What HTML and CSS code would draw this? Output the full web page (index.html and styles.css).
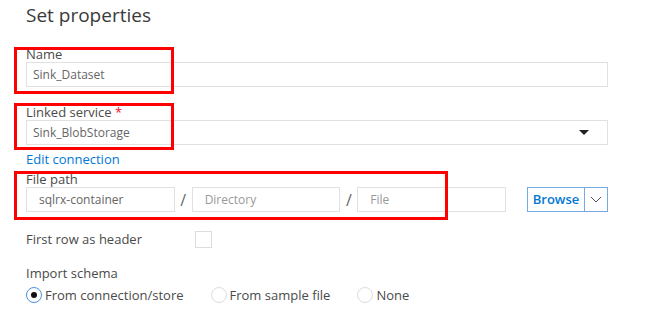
FILE: index.html
```html
<!DOCTYPE html>
<html lang="en">
<head>
    <meta charset="UTF-8">
    <title>Set properties</title>
    <link rel="stylesheet" href="styles.css">
</head>
<body>
    <div class="panel">
        <h1 class="title">Set properties</h1>

        <div class="field field-name">
            <label class="label">Name</label>
            <div class="input wide">Sink_Dataset</div>
        </div>

        <div class="field field-linked">
            <label class="label">Linked service <span class="required">*</span></label>
            <div class="input wide select">
                <span>Sink_BlobStorage</span>
                <span class="caret"></span>
            </div>
        </div>
        <a class="link" href="#">Edit connection</a>

        <div class="field field-path">
            <label class="label">File path</label>
            <div class="path-row">
                <div class="input path">sqlrx-container</div>
                <span class="slash">/</span>
                <div class="input path placeholder">Directory</div>
                <span class="slash">/</span>
                <div class="input path placeholder">File</div>
                <div class="browse">
                    <span class="browse-text">Browse</span>
                    <span class="browse-arrow">
                        <svg width="12" height="7" viewBox="0 0 12 7"><path d="M1 1 L6 6 L11 1" fill="none" stroke="#555" stroke-width="1"/></svg>
                    </span>
                </div>
            </div>
        </div>

        <div class="check-row">
            <span class="label">First row as header</span>
            <span class="checkbox"></span>
        </div>

        <div class="schema">
            <div class="label">Import schema</div>
            <div class="radios">
                <span class="radio-item"><span class="radio on"></span>From connection/store</span>
                <span class="radio-item"><span class="radio"></span>From sample file</span>
                <span class="radio-item"><span class="radio"></span>None</span>
            </div>
        </div>

        <!-- red markers drawn over the form -->
        <div class="marker m-name"></div>
        <div class="marker m-linked"></div>
        <div class="marker m-path"></div>
    </div>
</body>
</html>
```

FILE: styles.css
```css
html, body {
    margin: 0;
    background: #fff;
}
body {
    font-family: 'Segoe UI', 'Open Sans', sans-serif;
    color: #444;
    overflow: hidden;
}
.panel {
    position: relative;
    padding: 0 54px 0 26px;
    width: 582px;
}
.title {
    margin: 0;
    font-size: 19px;
    font-weight: 400;
    color: #3a3a3a;
    line-height: 30px;
    height: 45px;
}
.label {
    font-size: 13px;
    line-height: 15px;
    color: #4a4a4a;
    display: block;
}
.required {
    color: #e81123;
}
.field-name .label {
    margin-top: 2px;
}
.input {
    box-sizing: border-box;
    height: 25px;
    border: 1px solid #e1e1e1;
    font-size: 12px;
    line-height: 23px;
    color: #666;
    padding: 0 6px;
    background: #fff;
}
.wide {
    width: 582px;
}
.field-linked {
    margin-top: 18px;
}
.select {
    display: flex;
    justify-content: space-between;
    align-items: center;
}
.caret {
    width: 0;
    height: 0;
    border-left: 5px solid transparent;
    border-right: 5px solid transparent;
    border-top: 5px solid #222;
    margin-right: 12px;
}
.link {
    display: block;
    margin-top: 6px;
    font-size: 13px;
    line-height: 16px;
    color: #0078d4;
    text-decoration: none;
}
.field-path {
    margin-top: 5px;
}
.path-row {
    display: flex;
    align-items: center;
}
.path {
    width: 150px;
    padding-left: 12px;
}
.placeholder {
    color: #999;
}
.slash {
    width: 17px;
    text-align: center;
    font-size: 16px;
    color: #666;
}
.browse {
    margin-left: 21px;
    display: flex;
    height: 25px;
    box-sizing: border-box;
    border: 1px solid #76a7e6;
}
.browse-text {
    width: 56px;
    text-align: center;
    font-size: 13px;
    font-weight: 600;
    color: #0078d4;
    line-height: 23px;
    border-right: 1px solid #76a7e6;
}
.browse-arrow {
    width: 22px;
    display: flex;
    align-items: center;
    justify-content: center;
}
.check-row {
    display: flex;
    align-items: center;
    margin-top: 19px;
    height: 17px;
}
.check-row .label {
    width: 169px;
}
.checkbox {
    width: 15px;
    height: 15px;
    border: 1px solid #ddd;
}
.schema {
    margin-top: 18px;
}
.radios {
    display: flex;
    margin-top: 5px;
    font-size: 13px;
    color: #4a4a4a;
}
.radio-item {
    display: flex;
    align-items: center;
}
.radio-item + .radio-item {
    margin-left: 27px;
}
.radio {
    box-sizing: border-box;
    width: 16px;
    height: 16px;
    border-radius: 50%;
    border: 1px solid #ddd;
    margin-right: 3px;
    position: relative;
}
.radio.on {
    border-color: #4a90e2;
}
.radio.on::after {
    content: "";
    position: absolute;
    left: 4px;
    top: 4px;
    width: 6px;
    height: 6px;
    border-radius: 50%;
    background: #111;
}
.marker {
    position: absolute;
    border: 3px solid #f00;
    box-sizing: border-box;
}
.m-name {
    left: 14px;
    top: 47px;
    width: 160px;
    height: 47px;
}
.m-linked {
    left: 14px;
    top: 103px;
    width: 160px;
    height: 47px;
}
.m-path {
    left: 14px;
    top: 171px;
    width: 434px;
    height: 49px;
}
```
